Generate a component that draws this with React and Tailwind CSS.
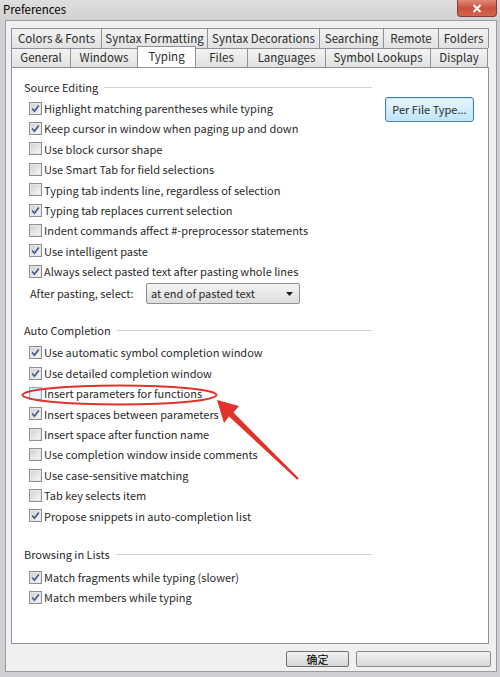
import React from "react";

const font = { fontFamily: '"Noto Sans CJK SC", "Noto Sans", sans-serif' };

const row1 = [
  { label: "Colors & Fonts", w: "w-[90px]" },
  { label: "Syntax Formatting", w: "w-[106px]" },
  { label: "Syntax Decorations", w: "w-[112px]" },
  { label: "Searching", w: "w-[64px]" },
  { label: "Remote", w: "w-[55px]" },
  { label: "Folders", w: "w-[51px]", last: true },
];

const row2 = [
  { label: "General", w: "w-[59px]" },
  { label: "Windows", w: "w-[67px]" },
  { label: "Typing", w: "w-[59px]", active: true },
  { label: "Files", w: "w-[52px]" },
  { label: "Languages", w: "w-[78px]" },
  { label: "Symbol Lookups", w: "w-[105px]" },
  { label: "Display", w: "w-[58px]", last: true },
];

const sourceEditing = [
  ["Highlight matching parentheses while typing", true],
  ["Keep cursor in window when paging up and down", true],
  ["Use block cursor shape", false],
  ["Use Smart Tab for field selections", false],
  ["Typing tab indents line, regardless of selection", false],
  ["Typing tab replaces current selection", true],
  ["Indent commands affect #-preprocessor statements", false],
  ["Use intelligent paste", true],
  ["Always select pasted text after pasting whole lines", true],
];

const autoCompletion = [
  ["Use automatic symbol completion window", true],
  ["Use detailed completion window", true],
  ["Insert parameters for functions", false, true],
  ["Insert spaces between parameters", true],
  ["Insert space after function name", false],
  ["Use completion window inside comments", false],
  ["Use case-sensitive matching", false],
  ["Tab key selects item", false],
  ["Propose snippets in auto-completion list", true],
];

const browsing = [
  ["Match fragments while typing (slower)", true],
  ["Match members while typing", true],
];

const Tab = ({ label, w, active, last }) => (
  <div
    className={`${w} flex items-center justify-center border-t border-l border-[#8e9199] text-[11.5px] text-[#2a2a2a] ${
      last ? "border-r" : ""
    } ${
      active
        ? "bg-white h-[21px] -mt-[2px] relative z-10 border-r -mr-px"
        : "bg-gradient-to-b from-[#f3f3f3] to-[#e1e1e1] h-[19px]"
    }`}
  >
    {label}
  </div>
);

const Checkbox = ({ checked, hot }) => (
  <span
    className={`w-[13px] h-[13px] shrink-0 border flex items-center justify-center ${
      hot ? "border-[#7fb4db]" : "border-[#8e8f8f]"
    }`}
  >
    <span
      className={`w-[11px] h-[11px] border flex items-center justify-center ${
        hot
          ? "border-[#d4ecfa] bg-[#e6f4fc]"
          : "border-[#e6e6e6] bg-gradient-to-br from-[#d2d2d2] to-[#f6f6f6]"
      }`}
    >
      {checked && (
        <svg width="9" height="9" viewBox="0 0 9 9">
          <path d="M1.2 4.6 L3.4 7.2 L7.8 1.4" fill="none" stroke="#3f5590" strokeWidth="1.6" />
        </svg>
      )}
    </span>
  </span>
);

const CheckRow = ({ label, checked, hot }) => (
  <div className="h-[20.4px] flex items-center pl-[5px]">
    <Checkbox checked={checked} hot={hot} />
    <span className="ml-[2px] text-[11px] text-[#2a2a2a] whitespace-nowrap">{label}</span>
  </div>
);

const GroupHeader = ({ title }) => (
  <div className="h-[14px] w-[348px] flex items-center">
    <span className="text-[11px] text-[#2a2a2a] whitespace-nowrap">{title}</span>
    <span className="flex-1 h-px bg-[#d0d3d6] ml-[6px]" />
  </div>
);

export default function App() {
  return (
    <div className="relative w-[500px] h-[677px] flex flex-col bg-[#cfd0d4] overflow-hidden" style={font}>
      {/* title bar */}
      <div className="h-[20px] flex items-start justify-between bg-gradient-to-b from-[#dedede] to-[#d2d2d2]">
        <span className="text-[11.5px] text-black ml-[3px] mt-[1px]">Preferences</span>
        <div className="w-[40px] h-[17px] mr-[3px] rounded-b-[4px] border border-t-0 border-[#8d3a33] bg-gradient-to-b from-[#e0897a] via-[#c9503f] to-[#d2664b] flex items-center justify-center">
          <svg width="10" height="9" viewBox="0 0 10 9">
            <path d="M1.5 1 L8.5 8 M8.5 1 L1.5 8" stroke="white" strokeWidth="2" />
          </svg>
        </div>
      </div>

      {/* window body */}
      <div className="flex-1 ml-[5px] mr-[3px] mb-[5px] bg-[#f0f0f0] border border-[#9a9ca2] flex flex-col pl-[5px] pt-[7px]">
        {/* tabs */}
        <div className="flex h-[20px]">
          {row1.map((t) => (
            <div
              key={t.label}
              className={`${t.w} h-[20px] flex items-center justify-center border-t border-l border-[#8e9199] bg-gradient-to-b from-[#f3f3f3] to-[#e1e1e1] text-[11.5px] text-[#2a2a2a] ${
                t.last ? "border-r" : ""
              }`}
            >
              {t.label}
            </div>
          ))}
        </div>
        <div className="flex items-end h-[19px]">
          {row2.map((t) => (
            <Tab key={t.label} {...t} />
          ))}
        </div>

        {/* panel */}
        <div className="w-[478px] h-[577px] bg-white border border-[#8e9199] pl-[12px] pt-[12px] flex flex-col">
          <div className="flex items-start">
            <div className="flex flex-col">
              <GroupHeader title="Source Editing" />
              <div className="mt-[4px] flex flex-col">
                {sourceEditing.map(([l, c]) => (
                  <CheckRow key={l} label={l} checked={c} />
                ))}
              </div>
              <div className="mt-[1px] h-[22px] flex items-center pl-[6px]">
                <span className="w-[116px] text-[11px] text-[#2a2a2a]">After pasting, select:</span>
                <div className="w-[154px] h-[21px] border border-[#8e8f8f] rounded-[2px] bg-gradient-to-b from-[#f4f4f4] to-[#dedede] flex items-center justify-between pl-[4px] pr-[6px]">
                  <span className="text-[11px] text-[#2a2a2a]">at end of pasted text</span>
                  <svg width="7" height="4" viewBox="0 0 7 4">
                    <path d="M0 0 H7 L3.5 4 Z" fill="#1e1e1e" />
                  </svg>
                </div>
              </div>
            </div>
            <div className="ml-[13px] mt-[17px] w-[89px] h-[25px] rounded-[3px] border border-[#3c7fb1] bg-gradient-to-b from-[#eaf6fd] to-[#bee4f8] flex items-center justify-center shadow-[inset_0_0_0_1px_#c8e8f9]">
              <span className="text-[11px] text-[#2a2a2a]">Per File Type...</span>
            </div>
          </div>

          <div className="mt-[19px]">
            <GroupHeader title="Auto Completion" />
          </div>
          <div className="mt-[5px] flex flex-col">
            {autoCompletion.map(([l, c, h]) => (
              <CheckRow key={l} label={l} checked={c} hot={h} />
            ))}
          </div>

          <div className="mt-[21px]">
            <GroupHeader title="Browsing in Lists" />
          </div>
          <div className="mt-[6px] flex flex-col">
            {browsing.map(([l, c]) => (
              <CheckRow key={l} label={l} checked={c} />
            ))}
          </div>
        </div>

        {/* bottom buttons */}
        <div className="mt-[7px] flex">
          <div className="ml-[275px] w-[63px] h-[16px] rounded-[2px] border border-[#707070] bg-gradient-to-b from-[#f2f2f2] to-[#d6d6d6] flex items-center justify-center">
            <span className="text-[11px] leading-none text-black">确定</span>
          </div>
          <div className="ml-[7px] w-[135px] h-[16px] rounded-[2px] border border-[#8a8a8a] bg-gradient-to-b from-[#f2f2f2] to-[#d8d8d8]" />
        </div>
      </div>

      {/* red annotation */}
      <svg className="absolute left-0 top-0 pointer-events-none" width="500" height="677" viewBox="0 0 500 677">
        <ellipse cx="119.5" cy="395" rx="97" ry="9.5" fill="none" stroke="#e2332b" strokeWidth="2" />
        <polygon
          points="217,400 239,406 233.5,412.5 298.8,478.3 297.2,479.7 229,416.5 224,423"
          fill="#e2332b"
        />
      </svg>
    </div>
  );
}
